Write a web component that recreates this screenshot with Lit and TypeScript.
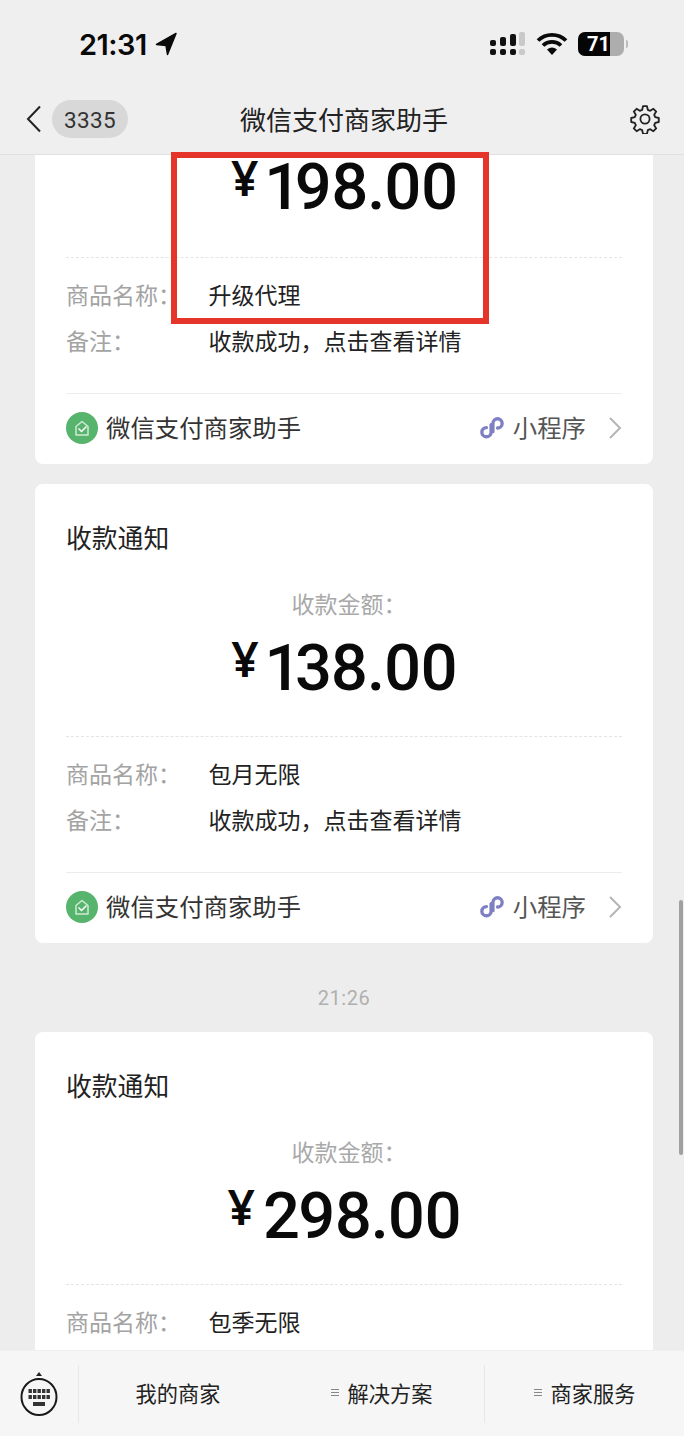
import { LitElement, html, css, svg } from "lit";
import { customElement } from "lit/decorators.js";

const notices = [
  { amount: "198.00", product: "升级代理", note: "收款成功，点击查看详情", clipped: true },
  { amount: "138.00", product: "包月无限", note: "收款成功，点击查看详情", clipped: false },
];

const gear = svg`<path d="M13 2.200h4l.8 3.600 2.400 1 3.200-2 2.800 2.800-2 3.200 1 2.400 3.600.8v4l-3.600.8-1 2.400 2 3.200-2.800 2.800-3.200-2-2.400 1-.8 3.600h-4l-.8-3.600-2.400-1-3.200 2-2.800-2.800 2-3.200-1-2.400-3.600-.8v-4l3.600-.8 1-2.400-2-3.200 2.800-2.800 3.200 2 2.400-1z" fill="none" stroke="#222" stroke-width="1.800" stroke-linejoin="round"/><circle cx="15" cy="15" r="4.600" fill="none" stroke="#222" stroke-width="1.800"/>`;

// two rows of five keys
const keys = [18, 24].flatMap((y) =>
  [8.5, 13, 17.5, 22, 26.5].map((x) => svg`<rect x=${x} y=${y} width="3.400" height="4" />`)
);

@customElement("app-root")
export class AppRoot extends LitElement {
  static override styles = css`
    :host {
      display: flex;
      flex-direction: column;
      position: relative;
      width: 684px;
      height: 1436px;
      overflow: hidden;
      background: #ededed;
      font-family: "Noto Sans CJK SC", "Noto Sans", sans-serif;
      color: #1c1c1c;
    }
    .top {
      flex: none;
      height: 155px;
      box-sizing: border-box;
      background: #efeff0;
      border-bottom: 1px solid #e0e0e0;
    }
    .status {
      height: 88px;
      display: flex;
      align-items: center;
      padding: 0 56px 0 79px;
    }
    .clock {
      font: 600 29px Inter, Roboto, sans-serif;
      letter-spacing: -0.5px;
      color: #0a0a0a;
    }
    .arrow { margin-left: 8px; }
    .status-right {
      margin-left: auto;
      display: flex;
      align-items: center;
      gap: 10px;
    }
    .battery {
      width: 46px;
      height: 24px;
      border-radius: 7px;
      overflow: hidden;
      background: #adadad;
    }
    .battery-fill {
      width: 32px;
      height: 24px;
      background: #050505;
      color: #fff;
      font: 700 20px/24px Roboto, sans-serif;
      text-align: right;
    }
    .battery-wrap { display: flex; align-items: center; gap: 2px; }
    .battery-cap {
      width: 2px;
      height: 8px;
      background: #bbb;
      border-radius: 0 2px 2px 0;
    }
    .nav {
      position: relative;
      height: 62px;
      display: flex;
      align-items: center;
      padding: 0 24px 0 26px;
    }
    .back { display: block; }
    .badge {
      width: 76px;
      height: 38px;
      margin-left: 10px;
      border-radius: 19px;
      background: #d8d8d8;
      font: 400 22.500px/40px Roboto, sans-serif;
      letter-spacing: 0.3px;
      color: #333;
      text-align: center;
    }
    .title {
      position: absolute;
      left: 4px;
      right: 0;
      text-align: center;
      font-size: 26px;
      line-height: 62px;
      color: #222;
    }
    .gear { margin-left: auto; display: block; }
    .feed {
      flex: 1;
      min-height: 0;
      padding: 0 31px 0 35px;
    }
    .card {
      background: #fff;
      border-radius: 8px;
      padding: 0 31px;
      margin-bottom: 20px;
    }
    .card.clipped {
      display: flow-root;
      border-radius: 0 0 8px 8px;
    }
    .heading {
      padding-top: 35px;
      font-size: 25.800px;
      line-height: 36px;
      color: #222;
    }
    .label {
      margin-top: 31px;
      padding-left: 10px;
      text-align: center;
      font-size: 23px;
      line-height: 34px;
      color: #a9a9a9;
    }
    .amount {
      display: flex;
      justify-content: center;
      align-items: flex-start;
      height: 70px;
      margin-top: 13px;
      color: #0a0a0a;
    }
    .clipped .amount { margin-top: -3px; }
    .currency {
      font: 600 48px/52px "Noto Sans", sans-serif;
      margin-right: 8px;
    }
    .value {
      font: 500 65px/70px Roboto, sans-serif;
      font-variant-numeric: proportional-nums;
      letter-spacing: -1.600px;
    }
    .rule {
      height: 0;
      border-top: 1px dashed #e4e4e4;
      margin-top: 33px;
    }
    .clipped .rule { margin-top: 35px; }
    .rows { padding: 13px 0 30px; }
    .row {
      display: grid;
      grid-template-columns: 142.500px 1fr;
      height: 46px;
      align-items: center;
      font-size: 23px;
      color: #222;
    }
    .row span:first-child { color: #a3a3a3; }
    .foot {
      display: flex;
      align-items: center;
      height: 68px;
      padding-bottom: 2px;
      border-top: 1px solid #ededed;
      font-size: 24.400px;
      color: #333;
    }
    .logo {
      width: 32px;
      height: 32px;
      margin-right: 8px;
      display: block;
    }
    .foot-name { padding-bottom: 4px; }
    .mini {
      margin-left: auto;
      display: flex;
      align-items: center;
      font-size: 24.400px;
      color: #555;
    }
    .mini-text { padding-bottom: 3px; }
    .mini svg:first-child { margin-right: 9px; }
    .mini svg:last-child { margin-left: 22px; }
    .time {
      text-align: center;
      font: 400 20px/28px Roboto, sans-serif;
      letter-spacing: 0.5px;
      color: #b0b0b0;
      margin: 41px 0 20px;
    }
    .dock {
      flex: none;
      position: relative;
      height: 85px;
      display: flex;
      align-items: center;
      background: #f6f6f6;
      border-top: 1px solid #f0f0f0;
      font-size: 21.200px;
      color: #222;
    }
    .kb {
      width: 78px;
      height: 58px;
      flex: none;
      border-right: 1px solid #e8e8e8;
      display: flex;
      align-items: center;
      justify-content: center;
    }
    .tab {
      height: 58px;
      display: flex;
      align-items: center;
      justify-content: center;
      gap: 9px;
      box-sizing: border-box;
      padding-bottom: 3px;
    }
    .tab-a { width: 200px; padding-right: 2px; }
    .tab-b { width: 206px; border-right: 1px solid #e8e8e8; }
    .tab-c { flex: 1; }
    .lines { width: 8px; display: flex; flex-direction: column; gap: 2px; }
    .lines i { display: block; height: 1px; background: #888; }
    .marker {
      position: absolute;
      left: 171px;
      top: 152px;
      width: 318px;
      height: 172px;
      box-sizing: border-box;
      border: 6px solid #e5352b;
    }
    .scrollbar {
      position: absolute;
      left: 679px;
      top: 900px;
      width: 4px;
      height: 255px;
      border-radius: 2px;
      background: #a0a0a0;
    }
  `;

  private renderCard(n: { amount: string; product: string; note: string; clipped: boolean }) {
    return html`
      <div class="card ${n.clipped ? "clipped" : ""}">
        ${n.clipped
          ? ""
          : html`<div class="heading">收款通知</div>
              <div class="label">收款金额：</div>`}
        <div class="amount">
          <span class="currency">¥</span><span class="value">${n.amount}</span>
        </div>
        <div class="rule"></div>
        <div class="rows">
          <div class="row"><span>商品名称：</span><span>${n.product}</span></div>
          ${n.note ? html`<div class="row"><span>备注：</span><span>${n.note}</span></div>` : ""}
        </div>
        ${n.note
          ? html`<div class="foot">
              <svg class="logo" viewBox="0 0 32 32">
                <circle cx="16" cy="16" r="16" fill="#57b46c" />
                <path d="M10 14.500l6-5 6 5v8.500h-12z" fill="none" stroke="#cfead5" stroke-width="1.500" stroke-linejoin="round" />
                <path d="M12.500 16.500l3 3 5-5" fill="none" stroke="#fff" stroke-width="1.500" />
              </svg>
              <span class="foot-name">微信支付商家助手</span>
              <span class="mini">
                <svg width="24" height="24" viewBox="0 0 26 26">
                  <path d="M12 9.500v8a5 5 0 1 1-5-5M14 17v-9a5 5 0 1 1 5 5" fill="none" stroke="#7f80c4" stroke-width="3.600" stroke-linecap="round" />
                </svg>
                <span class="mini-text">小程序</span>
                <svg width="14" height="24" viewBox="0 0 14 24">
                  <path d="M2 2l10 10-10 10" fill="none" stroke="#b5b5b5" stroke-width="2" />
                </svg>
              </span>
            </div>`
          : ""}
      </div>
    `;
  }

  override render() {
    return html`
      <div class="top">
        <div class="status">
          <span class="clock">21:31</span>
          <svg class="arrow" width="24" height="24" viewBox="0 0 24 24">
            <path d="M21 1.500L1.500 12.500l9.500 1 1.500 9z" fill="#0a0a0a" stroke="#0a0a0a" stroke-width="1.500" stroke-linejoin="round" />
          </svg>
          <div class="status-right">
            <svg width="36" height="24" viewBox="0 0 36 24">
              <g fill="#111">
                <rect x="0" y="8" width="6" height="6" rx="2" />
                <rect x="0" y="17" width="6" height="6" rx="2" />
                <rect x="10" y="5" width="6" height="9" rx="2" />
                <rect x="10" y="17" width="6" height="6" rx="2" />
                <rect x="20" y="2" width="6" height="12" rx="2" />
                <rect x="20" y="17" width="6" height="6" rx="2" />
              </g>
              <rect x="29" y="0" width="6" height="14" rx="2" fill="#c9c9c9" />
              <rect x="29" y="17" width="6" height="6" rx="2" fill="#c9c9c9" />
            </svg>
            <svg width="32" height="24" viewBox="0 0 32 24">
              <path d="M2 8.500a20 20 0 0 1 28 0M7 13.500a13 13 0 0 1 18 0" fill="none" stroke="#0a0a0a" stroke-width="3.800" />
              <path d="M11 17.500a8 8 0 0 1 10 0L16 23z" fill="#0a0a0a" />
            </svg>
            <div class="battery-wrap">
              <div class="battery"><div class="battery-fill">71</div></div>
              <span class="battery-cap"></span>
            </div>
          </div>
        </div>
        <div class="nav">
          <svg class="back" width="16" height="28" viewBox="0 0 16 28">
            <path d="M14 1.500L2 14l12 12.500" fill="none" stroke="#222" stroke-width="2" />
          </svg>
          <span class="badge">3335</span>
          <span class="title">微信支付商家助手</span>
          <svg class="gear" width="30" height="30" viewBox="0 0 30 30">${gear}</svg>
        </div>
      </div>

      <div class="feed">
        ${notices.map((n) => this.renderCard(n))}
        <div class="time">21:26</div>
        ${this.renderCard({ amount: "298.00", product: "包季无限", note: "", clipped: false })}
      </div>

      <div class="dock">
        <div class="kb">
          <svg width="38" height="46" viewBox="0 0 38 46">
            <path d="M16 5l3-4 3 4z" fill="#222" />
            <ellipse cx="19" cy="26" rx="17.500" ry="18" fill="none" stroke="#1a1a1a" stroke-width="2" />
            <g fill="#333">
              ${keys}
              <rect x="13" y="31" width="12" height="4" />
            </g>
          </svg>
        </div>
        <div class="tab tab-a">我的商家</div>
        <div class="tab tab-b"><span class="lines"><i></i><i></i><i></i></span>解决方案</div>
        <div class="tab tab-c"><span class="lines"><i></i><i></i><i></i></span>商家服务</div>
      </div>

      <div class="marker"></div>
      <div class="scrollbar"></div>
    `;
  }
}
